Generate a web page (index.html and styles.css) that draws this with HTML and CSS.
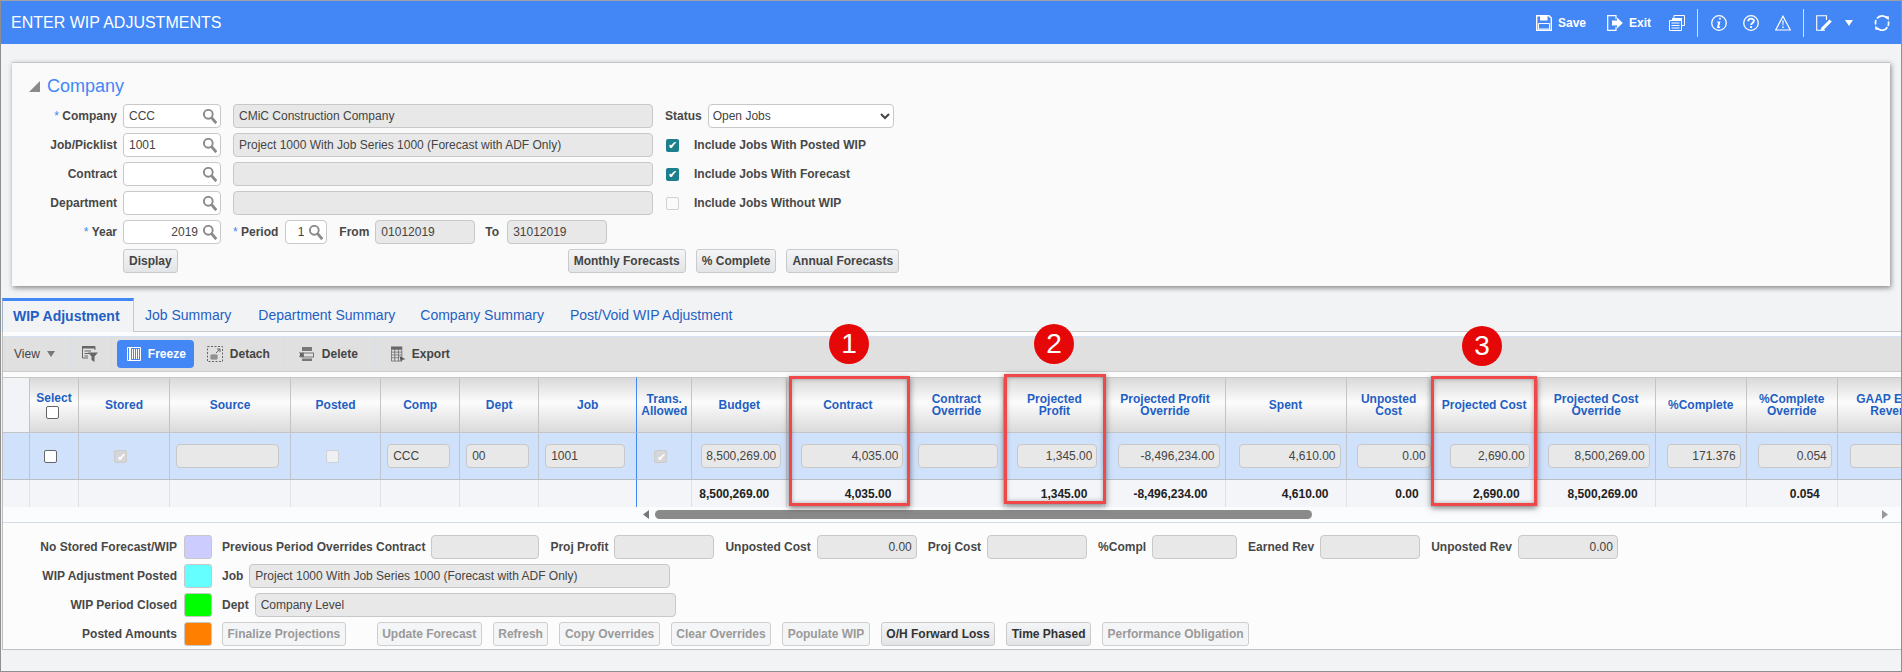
FILE: index.html
```html
<!DOCTYPE html>
<html lang="en">

<head>
    <meta charset="UTF-8">
    <title>Enter WIP Adjustments</title>
    <link rel="stylesheet" href="styles.css">
</head>

<body>
    <svg class="defs" width="0" height="0">
        <symbol id="search" viewBox="0 0 14 15">
            <circle cx="5.300" cy="5.300" r="4.400" fill="none" stroke="#8a8a8a" stroke-width="1.900"/>
            <path d="M8.500 8.700 L13.300 14.200" stroke="#8a8a8a" stroke-width="2.800" fill="none"/>
        </symbol>
    </svg>

    <div class="page">
        <!-- Title bar -->
        <header class="titlebar">
            <div class="title">ENTER WIP ADJUSTMENTS</div>
            <div class="actions">
                <svg class="hicon save" viewBox="0 0 16 16"><path d="M.7.7H13L15.3 3V15.3H.7Z" fill="none" stroke="#fff" stroke-width="1.4"/><path d="M4 1H11.500V5.500H4Z" fill="#fff"/><path d="M2.500 8.500H13.500V14H2.500Z" fill="none" stroke="#fff"/></svg>
                <span class="htext save-text">Save</span>
                <svg class="hicon exit" viewBox="0 0 16 16"><path d="M9 4V.7H.7V15.300H9V12" fill="none" stroke="#fff" stroke-width="1.2"/><path d="M5 5.500H10V2.500L15.800 8 10 13.500V10.500H5Z" fill="#fff"/></svg>
                <span class="htext exit-text">Exit</span>
                <svg class="hicon print" viewBox="0 0 16 16"><path d="M5 3V.5H15.500V10.500H13" fill="none" stroke="#fff"/><path d="M3 3H13V5H3Z" fill="#fff"/><path d="M.5 5.500H12.500V15.500H.5Z" fill="none" stroke="#fff"/><path d="M2.500 8H10.500M2.500 10.500H10.500M2.500 13H10.500" stroke="#fff"/></svg>
                <span class="hdivider"></span>
                <svg class="hicon info" viewBox="0 0 16 16"><circle cx="8" cy="8" r="7.300" fill="none" stroke="#fff" stroke-width="1.300"/><path d="M8.300 2.800H10L9.600 4.600H7.900ZM6.400 6.600H9.400L8.100 11.800H9.300L9 13H5.900L7.200 7.800H6.100Z" fill="#fff"/></svg>
                <svg class="hicon help" viewBox="0 0 16 16"><circle cx="8" cy="8" r="7.300" fill="none" stroke="#fff" stroke-width="1.300"/><path d="M5.200 6.200C5.200 2.800 10.900 2.800 10.900 6C10.900 8 8.100 8 8.100 10" fill="none" stroke="#fff" stroke-width="1.800"/><path d="M7.100 11H9.100V13H7.100Z" fill="#fff"/></svg>
                <svg class="hicon warn" viewBox="0 0 16 16"><path d="M8 1.200L15.300 15H.7Z" fill="none" stroke="#fff" stroke-width="1.200"/><path d="M7.300 5.500H8.700L8.400 10.500H7.600ZM7.300 11.500H8.700V13H7.300Z" fill="#fff"/></svg>
                <span class="hdivider second"></span>
                <svg class="hicon edit" viewBox="0 0 16 16"><path d="M9 15.300H.7V.7H10.500V5" fill="none" stroke="#fff" stroke-width="1.100"/><path d="M13.500 4.500L15.800 6.600 7.500 15 4.500 15.800 5.300 12.800Z" fill="#fff"/></svg>
                <svg class="caret-down" viewBox="0 0 8 6"><path d="M0 0H8L4 6Z" fill="#fff"/></svg>
                <svg class="hicon refresh" viewBox="0 0 16 16"><path d="M3 3.600A6.300 6.300 0 0 1 13 3.200M13.400 12.200A6.300 6.300 0 0 1 3 12.800M1.800 9.500A6.300 6.300 0 0 1 2 5M14.300 6.500A6.300 6.300 0 0 1 14 11" fill="none" stroke="#fff" stroke-width="1.700"/><path d="M11 1L15 1.500 14.500 5.500ZM5 15L1 14.500 1.500 10.500Z" fill="#fff"/></svg>
            </div>
        </header>

        <!-- Company panel -->
        <section class="panel">
            <h2 class="panel-title"><svg class="twisty" viewBox="0 0 11 11"><path d="M11 0V11H0Z" fill="#8a8a8a"/></svg>Company</h2>

            <div class="form-row">
                <label class="lbl"><span class="req">* </span>Company</label>
                <div class="lookup"><input type="text" value="CCC"><svg class="mag"><use href="#search"/></svg></div>
                <input class="ro wide" type="text" value="CMiC Construction Company" readonly>
                <label class="lbl status-lbl">Status</label>
                <select class="status"><option>Open Jobs</option></select>
            </div>
            <div class="form-row">
                <label class="lbl">Job/Picklist</label>
                <div class="lookup"><input type="text" value="1001"><svg class="mag"><use href="#search"/></svg></div>
                <input class="ro wide" type="text" value="Project 1000 With Job Series 1000 (Forecast with ADF Only)" readonly>
                <input class="chk teal" type="checkbox" checked>
                <label class="lbl chk-lbl">Include Jobs With Posted WIP</label>
            </div>
            <div class="form-row">
                <label class="lbl">Contract</label>
                <div class="lookup"><input type="text"><svg class="mag"><use href="#search"/></svg></div>
                <input class="ro wide" type="text" readonly>
                <input class="chk teal" type="checkbox" checked>
                <label class="lbl chk-lbl">Include Jobs With Forecast</label>
            </div>
            <div class="form-row">
                <label class="lbl">Department</label>
                <div class="lookup"><input type="text"><svg class="mag"><use href="#search"/></svg></div>
                <input class="ro wide" type="text" readonly>
                <input class="chk off" type="checkbox" disabled>
                <label class="lbl chk-lbl">Include Jobs Without WIP</label>
            </div>
            <div class="form-row">
                <label class="lbl"><span class="req">* </span>Year</label>
                <div class="lookup"><input class="num" type="text" value="2019"><svg class="mag"><use href="#search"/></svg></div>
                <label class="lbl period-lbl"><span class="req">* </span>Period</label>
                <div class="lookup small"><input class="num" type="text" value="1"><svg class="mag"><use href="#search"/></svg></div>
                <label class="lbl from-lbl">From</label>
                <input class="ro date" type="text" value="01012019" readonly>
                <label class="lbl to-lbl">To</label>
                <input class="ro date" type="text" value="31012019" readonly>
            </div>
            <div class="form-row last">
                <button class="btn display">Display</button>
                <button class="btn monthly">Monthly Forecasts</button>
                <button class="btn">% Complete</button>
                <button class="btn">Annual Forecasts</button>
            </div>
        </section>

        <!-- Tabs -->
        <nav class="tabs">
            <a class="tab active">WIP Adjustment</a>
            <a class="tab">Job Summary</a>
            <a class="tab">Department Summary</a>
            <a class="tab">Company Summary</a>
            <a class="tab">Post/Void WIP Adjustment</a>
        </nav>

        <div class="content">
            <!-- Toolbar -->
            <div class="toolbar">
                <span class="view">View</span>
                <svg class="view-caret" viewBox="0 0 8 6"><path d="M0 0H8L4 6Z" fill="#777"/></svg>
                <span class="tdivider first"></span>
                <svg class="ticon filter" viewBox="0 0 16 16"><path d="M.5.5H13V4M.5.5V12H6" fill="none" stroke="#666"/><path d="M0 0H13V2.500H0ZM2.500 4.500H9V5.500H2.500ZM2.500 7H7V8H2.500ZM2.500 9.500H6V10.500H2.500Z" fill="#666"/><path d="M6 6.500H16L12.500 10.500V16L9.500 14V10.500Z" fill="#666"/></svg>
                <span class="tdivider"></span>
                <button class="freeze">
                    <svg class="ticon" viewBox="0 0 14 14"><path d="M.5.5H13.500V13.500H.5Z" fill="none" stroke="#fff"/><path d="M2 0H4V14H2ZM9 2H10V12H9ZM11 2H12V12H11ZM5 2H6V12H5ZM7 2H8V12H7Z" fill="#fff"/></svg>
                    Freeze
                </button>
                <svg class="ticon detach" viewBox="0 0 16 16"><path d="M.5.5H15.500V15.500H.5Z" fill="none" stroke="#666" stroke-dasharray="2 1.500"/><path d="M4 9H10V13H4ZM6 9V13M8 9V13M4 11H10" fill="none" stroke="#666" stroke-width=".8"/><path d="M9 7L13 3M10 3H13V6" fill="none" stroke="#666"/></svg>
                <span class="tlabel">Detach</span>
                <span class="tdivider delete-div"></span>
                <svg class="ticon delete" viewBox="0 0 16 16"><path d="M3 1H13V5H3ZM1 6.500H15V11.500H1ZM3 12.500H13V15H3Z" fill="#777"/><path d="M5 7.500H14V10.500H5Z" fill="#e0e0e0"/><path d="M.5 6.500L4 10.500M4 6.500L.5 10.500" stroke="#555"/></svg>
                <span class="tlabel">Delete</span>
                <span class="tdivider export-div"></span>
                <svg class="ticon export" viewBox="0 0 16 16"><path d="M0 0H12V3H0Z" fill="#666"/><path d="M.5 3H11.500V15.500H.5ZM4 3V15.500M8 3V15.500M.5 6H11.500M.5 9H11.500M.5 12H8" fill="none" stroke="#777"/><path d="M9 10L15.500 13.500 12 14 10.500 16Z" fill="#555"/></svg>
                <span class="tlabel export-label">Export</span>
            </div>

            <!-- Grid -->
            <div class="grid-wrap">
                <table class="grid">
                    <colgroup>
                        <col><col><col><col><col><col><col><col><col><col><col>
                        <col><col><col><col><col><col><col><col><col><col>
                    </colgroup>
                    <thead>
                        <tr>
                            <th class="blank"></th>
                            <th>Select<br><input class="chk plain head-chk" type="checkbox"></th>
                            <th>Stored</th>
                            <th>Source</th>
                            <th>Posted</th>
                            <th>Comp</th>
                            <th>Dept</th>
                            <th class="frozen">Job</th>
                            <th>Trans.<br>Allowed</th>
                            <th>Budget</th>
                            <th>Contract</th>
                            <th>Contract<br>Override</th>
                            <th>Projected<br>Profit</th>
                            <th>Projected Profit<br>Override</th>
                            <th>Spent</th>
                            <th>Unposted<br>Cost</th>
                            <th>Projected Cost</th>
                            <th>Projected Cost<br>Override</th>
                            <th>%Complete</th>
                            <th>%Complete<br>Override</th>
                            <th>GAAP Earned<br>Revenue</th>
                        </tr>
                    </thead>
                    <tbody>
                        <tr class="row">
                            <td></td>
                            <td class="left ind15"><input class="chk plain" type="checkbox"></td>
                            <td class="left ind35"><input class="chk grey" type="checkbox" checked disabled></td>
                            <td class="left"><input class="ro w103" type="text" readonly></td>
                            <td class="left ind35"><input class="chk off" type="checkbox" disabled></td>
                            <td class="left"><input class="ro w63" type="text" value="CCC" readonly></td>
                            <td class="left"><input class="ro w63" type="text" value="00" readonly></td>
                            <td class="left frozen"><input class="ro w80" type="text" value="1001" readonly></td>
                            <td class="left ind17"><input class="chk grey" type="checkbox" checked disabled></td>
                            <td><input class="ro num w80" type="text" value="8,500,269.00" readonly></td>
                            <td><input class="ro num w102" type="text" value="4,035.00" readonly></td>
                            <td><input class="ro num w80" type="text" readonly></td>
                            <td class="far"><input class="ro num w80" type="text" value="1,345.00" readonly></td>
                            <td><input class="ro num w102" type="text" value="-8,496,234.00" readonly></td>
                            <td><input class="ro num w102" type="text" value="4,610.00" readonly></td>
                            <td class="flush"><input class="ro num w74" type="text" value="0.00" readonly></td>
                            <td class="far"><input class="ro num w80" type="text" value="2,690.00" readonly></td>
                            <td><input class="ro num w102" type="text" value="8,500,269.00" readonly></td>
                            <td><input class="ro num w74" type="text" value="171.376" readonly></td>
                            <td><input class="ro num w74" type="text" value="0.054" readonly></td>
                            <td><input class="ro num w98" type="text" readonly></td>
                        </tr>
                        <tr class="totals">
                            <td></td>
                            <td></td>
                            <td></td>
                            <td></td>
                            <td></td>
                            <td></td>
                            <td></td>
                            <td class="frozen"></td>
                            <td></td>
                            <td>8,500,269.00</td>
                            <td>4,035.00</td>
                            <td></td>
                            <td>1,345.00</td>
                            <td>-8,496,234.00</td>
                            <td>4,610.00</td>
                            <td class="tight">0.00</td>
                            <td>2,690.00</td>
                            <td>8,500,269.00</td>
                            <td></td>
                            <td>0.054</td>
                            <td></td>
                        </tr>
                    </tbody>
                </table>
            </div>

            <div class="scrollbar">
                <svg class="sb-arrow" viewBox="0 0 6 9"><path d="M6 0V9L0 4.500Z" fill="#777"/></svg>
                <span class="thumb"></span>
                <svg class="sb-arrow" viewBox="0 0 6 9"><path d="M0 0V9L6 4.500Z" fill="#999"/></svg>
            </div>

            <!-- Legend and totals -->
            <div class="legend">
                <div class="legend-row">
                    <span class="key">No Stored Forecast/WIP</span>
                    <span class="swatch lilac"></span>
                    <span class="lbl first-lbl">Previous Period Overrides Contract</span>
                    <input class="ro w108" type="text" readonly>
                    <span class="lbl pair">Proj Profit</span>
                    <input class="ro w100" type="text" readonly>
                    <span class="lbl pair">Unposted Cost</span>
                    <input class="ro num w100" type="text" value="0.00" readonly>
                    <span class="lbl pair">Proj Cost</span>
                    <input class="ro w100" type="text" readonly>
                    <span class="lbl pair">%Compl</span>
                    <input class="ro w85" type="text" readonly>
                    <span class="lbl pair">Earned Rev</span>
                    <input class="ro w100" type="text" readonly>
                    <span class="lbl pair">Unposted Rev</span>
                    <input class="ro num w100" type="text" value="0.00" readonly>
                </div>
                <div class="legend-row">
                    <span class="key">WIP Adjustment Posted</span>
                    <span class="swatch cyan"></span>
                    <span class="lbl first-lbl">Job</span>
                    <input class="ro w421" type="text" value="Project 1000 With Job Series 1000 (Forecast with ADF Only)" readonly>
                </div>
                <div class="legend-row">
                    <span class="key">WIP Period Closed</span>
                    <span class="swatch lime"></span>
                    <span class="lbl first-lbl">Dept</span>
                    <input class="ro w421" type="text" value="Company Level" readonly>
                </div>
                <div class="legend-row">
                    <span class="key">Posted Amounts</span>
                    <span class="swatch orange"></span>
                    <button class="btn dim first-btn">Finalize Projections</button>
                    <button class="btn dim update">Update Forecast</button>
                    <button class="btn dim">Refresh</button>
                    <button class="btn dim">Copy Overrides</button>
                    <button class="btn dim">Clear Overrides</button>
                    <button class="btn dim">Populate WIP</button>
                    <button class="btn dark">O/H Forward Loss</button>
                    <button class="btn dark">Time Phased</button>
                    <button class="btn dim">Performance Obligation</button>
                </div>
            </div>
        </div>
    </div>

    <!-- Callouts drawn over the grid -->
    <div class="callout box-one"></div>
    <div class="callout box-two"></div>
    <div class="callout box-three"></div>
    <div class="marker mark-one">1</div>
    <div class="marker mark-two">2</div>
    <div class="marker mark-three">3</div>
</body>

</html>
```
FILE: styles.css
```css
/* styles.css */
* {
    box-sizing: border-box;
}

body {
    margin: 0;
    width: 1902px;
    height: 672px;
    position: relative;
    overflow: hidden;
    font-family: "Liberation Sans", Arial, sans-serif;
    font-size: 12px;
    color: #444;
}

.defs {
    position: absolute;
}

.page {
    height: 672px;
    background-color: #f2f3f5;
    border: 1px solid #8f8f8f;
    border-top-color: #a0a0a0;
}

/* title bar */
.titlebar {
    height: 43px;
    background-color: #4287f5;
    color: #fff;
    display: flex;
    justify-content: space-between;
    align-items: center;
    padding-left: 10px;
}

.title {
    font-size: 16px;
}

.actions {
    display: flex;
    align-items: center;
    margin-right: 11px;
}

.hicon {
    width: 16px;
    height: 16px;
    flex: none;
}

.htext {
    font-weight: bold;
    font-size: 12px;
    color: #fff;
}

.save-text {
    margin-left: 6px;
    width: 27px;
}

.exit {
    margin-left: 22px;
}

.exit-text {
    margin-left: 6px;
    width: 22px;
}

.print {
    margin-left: 18px;
}

.hdivider {
    width: 1px;
    height: 28px;
    background-color: #cfe0fb;
    margin: 0 13px 0 12px;
}

.help,
.warn {
    margin-left: 16px;
}

.hdivider.second {
    margin-left: 12px;
    margin-right: 12px;
}

.caret-down {
    width: 8px;
    height: 6px;
    margin-left: 13px;
}

.refresh {
    margin-left: 21px;
}

/* company panel */
.panel {
    margin: 18px 11px 0 11px;
    height: 224px;
    background-color: #fafafa;
    border-top: 1px solid #c4c6c8;
    box-shadow: 1px 2px 5px rgba(0, 0, 0, 0.45);
    padding-top: 13px;
}

.panel-title {
    margin: 0 0 8px 17px;
    height: 20px;
    display: flex;
    align-items: center;
    font-size: 18px;
    font-weight: normal;
    color: #4287f5;
}

.twisty {
    width: 11px;
    height: 11px;
    margin-right: 7px;
}

.form-row {
    display: flex;
    align-items: center;
    height: 24px;
    margin-bottom: 5px;
}

.lbl {
    font-weight: bold;
    color: #484848;
    white-space: nowrap;
}

.form-row > .lbl:first-child {
    width: 105px;
    margin-right: 6px;
    text-align: right;
}

.req {
    font-weight: normal;
    color: #4287f5;
}

input[type="text"] {
    height: 24px;
    font-family: "Liberation Sans", Arial, sans-serif;
    font-size: 12px;
    color: #444;
    padding: 0 5px;
    outline: none;
}

.lookup {
    width: 98px;
    height: 24px;
    display: flex;
    align-items: center;
    background-color: #fff;
    border: 1px solid #c8c8c8;
    border-radius: 4px;
    flex: none;
}

.lookup input[type="text"] {
    border: none;
    background: none;
    height: 22px;
    width: 78px;
    min-width: 0;
    flex: 1;
}

.lookup .mag {
    width: 14px;
    height: 15px;
    margin-right: 3px;
    flex: none;
}

.lookup.small {
    width: 42px;
}

.lookup.small input[type="text"] {
    padding: 0 6px 0 0;
}

.num,
input.num[type="text"] {
    text-align: right;
}

input.num[type="text"] {
    padding: 0 4px 0 2px;
}

.lookup input.num[type="text"] {
    padding-right: 5px;
}

.ro {
    background-color: #e8e8e8;
    border: 1px solid #c8c8c8;
    border-radius: 4px;
}

.wide {
    width: 420px;
    margin-left: 12px;
}

.status-lbl {
    margin-left: 12px;
}

.status {
    width: 186px;
    height: 24px;
    margin-left: 6px;
    font-family: "Liberation Sans", Arial, sans-serif;
    font-size: 12px;
    color: #444;
    background-color: #fff;
    border: 1px solid #c8c8c8;
    border-radius: 4px;
}

.chk {
    appearance: none;
    -webkit-appearance: none;
    width: 13px;
    height: 13px;
    margin: 0;
    flex: none;
    border-radius: 2px;
    position: relative;
    vertical-align: middle;
}

.chk:checked::after {
    content: "\2714";
    position: absolute;
    left: 1.5px;
    top: -1px;
    font-size: 11px;
    line-height: 14px;
    color: #fff;
}

.teal {
    background-color: #1c7f8e;
    margin-left: 13px;
}

.off {
    background-color: #eef0f4;
    border: 1px solid #cfd1d5;
}

.form-row .off {
    margin-left: 13px;
    background-color: #fafafa;
}

.grey {
    background-color: #d6d6d8;
    border: 1px solid #ccc;
}

.plain {
    background-color: #fff;
    border: 1px solid #666;
}

.chk-lbl {
    margin-left: 15px;
}

.period-lbl {
    margin-left: 12px;
    margin-right: 7px;
}

.from-lbl {
    margin-left: 12px;
    margin-right: 6px;
}

.date {
    width: 100px;
}

.to-lbl {
    margin-left: 10px;
    margin-right: 8px;
}

.btn {
    height: 24px;
    padding: 0 5px;
    font-family: "Liberation Sans", Arial, sans-serif;
    font-size: 12px;
    font-weight: bold;
    color: #444;
    background: linear-gradient(#f4f5f6, #e2e4e6);
    border: 1px solid #c8cacc;
    border-radius: 3px;
    white-space: nowrap;
}

.form-row.last .btn {
    margin-right: 10px;
}

.display {
    margin-left: 111px;
}

.form-row.last .display {
    margin-right: 0;
}

.monthly {
    margin-left: 390px;
}

/* tabs */
.tabs {
    margin: 12px 0 0 1px;
    height: 34px;
    display: flex;
    font-size: 14px;
    border-bottom: 1px solid #c6c8ca;
}

.tab {
    padding: 9px 0 0 0;
    margin-left: 12px;
    margin-right: 14px;
    color: #1f5fc4;
    white-space: nowrap;
}

.tab.active {
    width: 132px;
    height: 34px;
    margin: 0;
    padding: 7px 0 0 10px;
    font-weight: bold;
    color: #1f5fc4;
    background-color: #f2f3f5;
    border-top: 3px solid #4287f5;
    border-left: 1px solid #9bb4cc;
    border-right: 1px solid #c6c8ca;
}

.tab:nth-child(2) {
    margin-left: 11px;
}

.tab:nth-child(3) {
    margin-left: 13px;
}

.tab:nth-child(4) {
    margin-left: 11px;
}

.tab:nth-child(5) {
    margin-left: 12px;
}

.content {
    margin-left: 1px;
    height: 318px;
    background-color: #fcfcfc;
    border-left: 1px solid #bdbdbd;
    border-bottom: 1px solid #c0c0c0;
    padding-top: 4px;
}

/* toolbar */
.toolbar {
    height: 36px;
    display: flex;
    align-items: center;
    background-color: #e0e0e0;
    border-top: 1px solid #d4e2f6;
    border-bottom: 1px solid #cbcbcb;
}

.view {
    margin-left: 11px;
    color: #444;
}

.view-caret {
    width: 8px;
    height: 6px;
    margin-left: 7px;
}

.tdivider {
    width: 1px;
    height: 32px;
    background-color: #d8dee6;
}

.tdivider.first {
    margin-left: 15px;
    margin-right: 11px;
}

.ticon {
    width: 16px;
    height: 16px;
    flex: none;
}

.filter {
    margin-right: 13px;
}

.freeze {
    width: 77px;
    height: 28px;
    margin-left: 5px;
    padding: 0 0 0 10px;
    display: flex;
    align-items: center;
    gap: 7px;
    font-family: "Liberation Sans", Arial, sans-serif;
    font-size: 12px;
    font-weight: bold;
    color: #fff;
    background-color: #4287f5;
    border: none;
    border-radius: 4px;
}

.freeze .ticon {
    width: 14px;
    height: 14px;
}

.detach {
    margin-left: 13px;
}

.tlabel {
    font-weight: bold;
    color: #444;
    margin-left: 7px;
}

.delete-div {
    margin-left: 13px;
}

.delete {
    margin-left: 15px;
}

.export-div {
    margin-left: 16px;
}

.export {
    margin-left: 16px;
    width: 15px;
}

.export-label {
    margin-left: 6px;
}

/* grid */
.grid-wrap {
    margin-top: 5px;
    overflow: hidden;
    background-color: #f3f5f8;
}

.grid {
    width: 1951px;
    table-layout: fixed;
    border-collapse: separate;
    border-spacing: 0;
}

.grid col:nth-child(1) { width: 27px; }
.grid col:nth-child(2) { width: 49px; }
.grid col:nth-child(3) { width: 91px; }
.grid col:nth-child(4) { width: 121px; }
.grid col:nth-child(5) { width: 90px; }
.grid col:nth-child(6) { width: 79px; }
.grid col:nth-child(7) { width: 79px; }
.grid col:nth-child(8) { width: 98px; }
.grid col:nth-child(9) { width: 55px; }
.grid col:nth-child(10) { width: 95px; }
.grid col:nth-child(11) { width: 122px; }
.grid col:nth-child(12) { width: 95px; }
.grid col:nth-child(13) { width: 101px; }
.grid col:nth-child(14) { width: 120px; }
.grid col:nth-child(15) { width: 121px; }
.grid col:nth-child(16) { width: 85px; }
.grid col:nth-child(17) { width: 106px; }
.grid col:nth-child(18) { width: 118px; }
.grid col:nth-child(19) { width: 91px; }
.grid col:nth-child(20) { width: 91px; }
.grid col:nth-child(21) { width: 116px; }

.grid th {
    height: 56px;
    padding: 0;
    font-size: 12px;
    line-height: 12px;
    color: #1f5fc4;
    text-align: center;
    background: linear-gradient(#d9d9d9, #fcfcfc 45%, #dadada);
    border-top: 1px solid #c8c8c8;
    border-right: 1px solid #c4c4c4;
    border-bottom: 1px solid #c4c4c4;
}

.grid th.blank {
    background: #f2f3f6;
}

.head-chk {
    margin: 2px 4px 0 0;
}

.row td {
    height: 47px;
    padding: 0 5px 0 6px;
    text-align: right;
    background-color: #d0e1fb;
    border-right: 1px solid #c0c4cc;
    border-bottom: 1px solid #b9bdc4;
}

.row td.left {
    text-align: left;
}

.row td.ind15 {
    padding-left: 14px;
}

.row td.ind35 {
    padding-left: 35px;
}

.row td.ind17 {
    padding-left: 17px;
}

.row td.far {
    padding-right: 7px;
}

.row td.flush {
    padding-right: 0;
}

.totals td {
    height: 27px;
    padding-right: 17px;
    font-weight: bold;
    color: #222;
    text-align: right;
    background-color: #f3f5f8;
    border-right: 1px solid #dde2e8;
    white-space: nowrap;
}

.totals td.tight {
    padding-right: 12px;
}

.grid .frozen {
    border-right: 1px solid #4287f5;
}

.w63 { width: 63px; }
.w74 { width: 74px; }
.w80 { width: 80px; }
.w85 { width: 85px; }
.w98 { width: 98px; }
.w100 { width: 100px; }
.w102 { width: 102px; }
.w103 { width: 103px; }
.w108 { width: 108px; }
.w421 { width: 421px; }

.scrollbar {
    height: 16px;
    display: flex;
    align-items: center;
    padding-left: 640px;
    background-color: #fbfcfe;
    border-bottom: 1px solid #d5dbe3;
}

.sb-arrow {
    width: 6px;
    height: 9px;
    flex: none;
}

.thumb {
    width: 657px;
    height: 9px;
    margin-left: 6px;
    margin-right: 570px;
    background-color: #8a8a8a;
    border-radius: 5px;
}

/* legend */
.legend {
    padding-top: 12px;
}

.legend-row {
    display: flex;
    align-items: center;
    height: 24px;
    margin-bottom: 5px;
}

.key {
    width: 174px;
    text-align: right;
    font-weight: bold;
    color: #484848;
    white-space: nowrap;
}

.swatch {
    width: 28px;
    height: 24px;
    margin-left: 7px;
    border: 1px solid #c8c8c8;
    border-radius: 3px;
    flex: none;
}

.lilac { background-color: #ccccff; }
.cyan { background-color: #66ffff; }
.lime { background-color: #00ff00; }
.orange { background-color: #ff8000; }

.first-lbl {
    margin-left: 10px;
    margin-right: 6px;
}

.pair {
    margin-left: 11px;
    margin-right: 6px;
}

.legend-row .btn {
    margin-right: 11px;
    padding: 0 4.5px;
}

.first-btn {
    margin-left: 10px;
}

.legend-row .update {
    margin-left: 20px;
}

.dim {
    color: #9a9a9a;
    background: #f4f5f6;
    border-color: #cfcfcf;
}

.dark {
    color: #333;
}

/* red callouts over the grid */
.callout {
    position: absolute;
    border: 3px solid #f04848;
    box-shadow: 0 2px 6px rgba(0, 0, 0, 0.5), inset 0 0 4px rgba(0, 0, 0, 0.3);
}

.box-one {
    left: 789px;
    top: 376px;
    width: 121px;
    height: 130px;
}

.box-two {
    left: 1004px;
    top: 374px;
    width: 102px;
    height: 130px;
}

.box-three {
    left: 1431px;
    top: 376px;
    width: 106px;
    height: 130px;
}

.marker {
    position: absolute;
    width: 40px;
    height: 40px;
    border-radius: 50%;
    background-color: #e60808;
    color: #fff;
    font-size: 28px;
    line-height: 40px;
    text-align: center;
    top: 324px;
}

.mark-one {
    left: 829px;
}

.mark-two {
    left: 1034px;
}

.mark-three {
    left: 1462px;
    top: 326px;
}
```
